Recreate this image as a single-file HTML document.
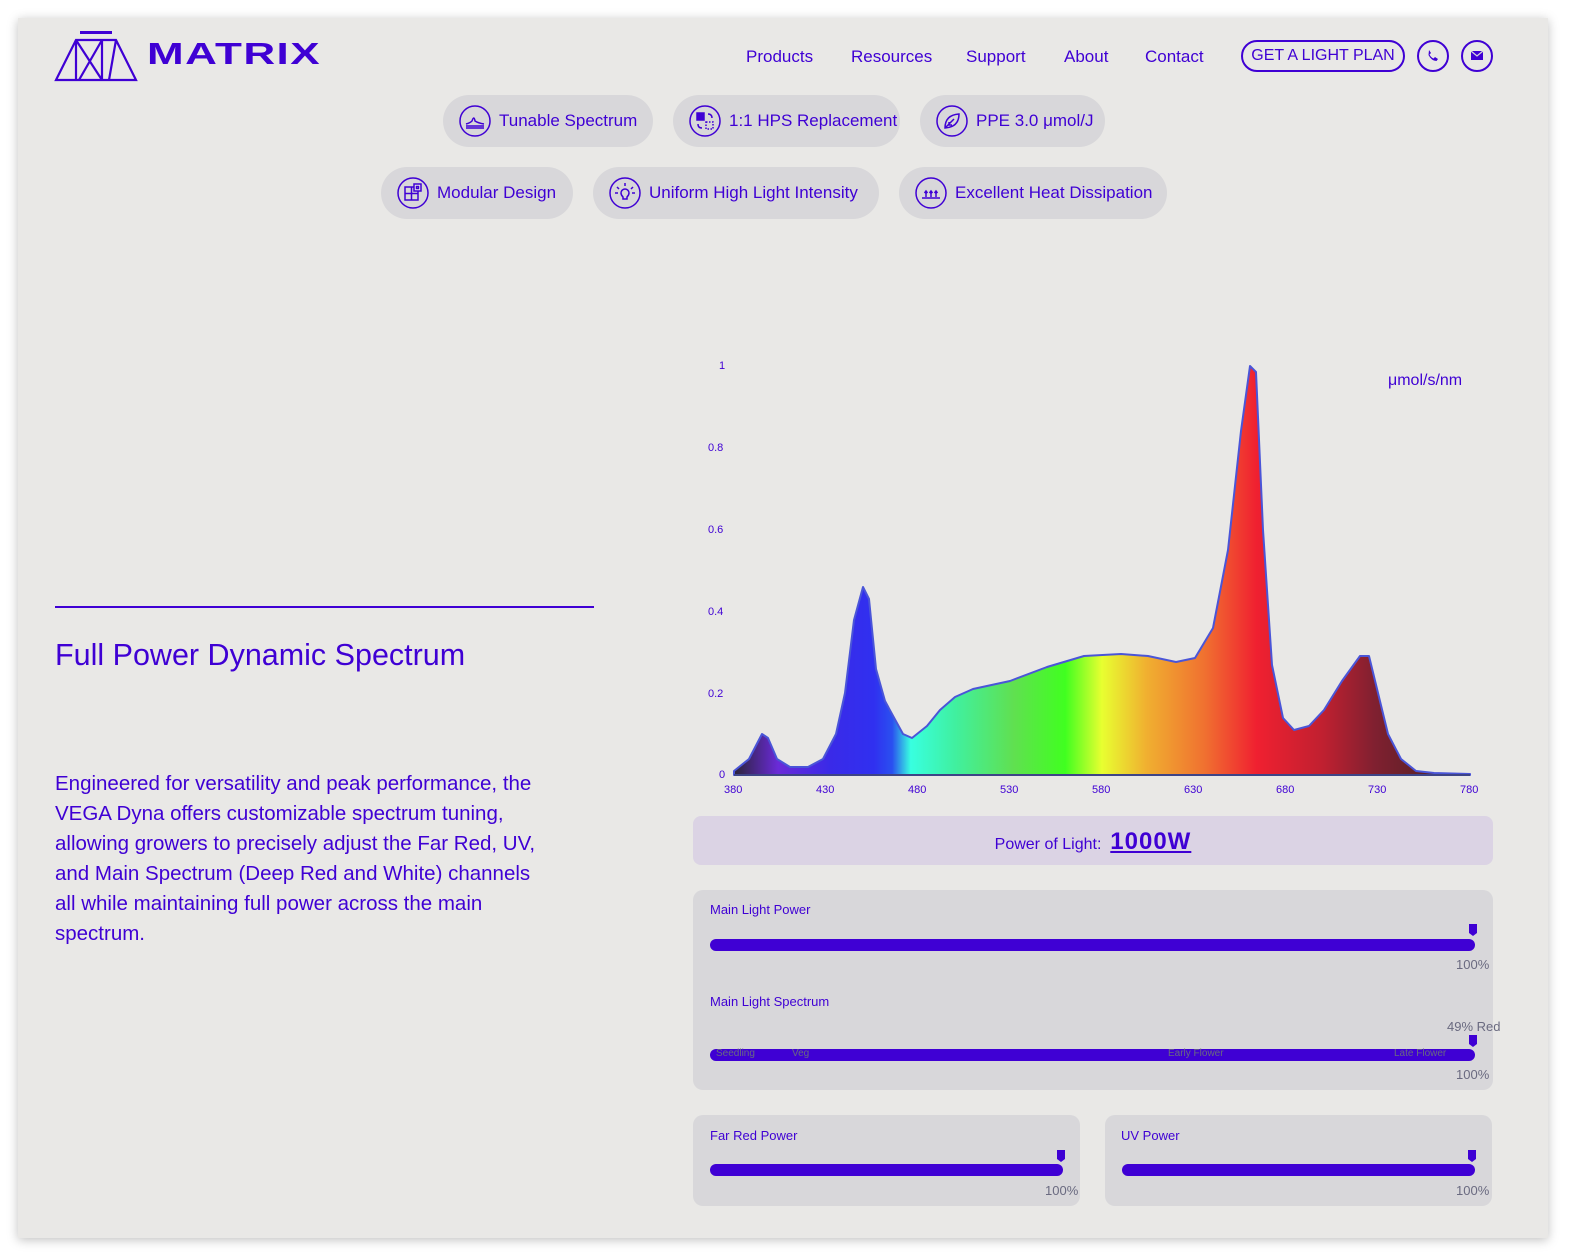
<!DOCTYPE html>
<html><head><meta charset="utf-8">
<style>
*{margin:0;padding:0;box-sizing:border-box}
body{width:1570px;height:1260px;background:#fff;font-family:"Liberation Sans",sans-serif;color:#3f00d4;position:relative;overflow:hidden}
.card{position:absolute;left:18px;top:18px;width:1530px;height:1220px;background:#e9e8e6;box-shadow:0 2px 10px rgba(0,0,0,.25)}
.a{position:absolute}
.nav{font-size:17px;top:47px}
.pill{position:absolute;height:52px;border-radius:26px;background:#d8d7da;font-size:17px;display:flex;align-items:center;padding-left:16px;white-space:nowrap}
.pill svg{width:32px;height:32px;margin-right:8px;flex:none}
.lbl{font-size:13px;position:absolute}
.pct{font-size:13px;color:#6a6a80;position:absolute}
.bar{position:absolute;height:12px;border-radius:6px;background:#3f00d4}
.knob{position:absolute;width:8px;height:12px;background:#3f00d4;clip-path:polygon(0 0,100% 0,100% 75%,50% 100%,0 75%)}
.ax{font-size:11px;position:absolute}
</style></head><body>
<div class="card"></div>

<!-- logo -->
<svg class="a" style="left:54px;top:30px" width="84" height="52" viewBox="0 0 84 52" fill="none" stroke="#3f00d4" stroke-width="2.2">
<rect x="26" y="1" width="32" height="3" fill="#3f00d4" stroke="none"/>
<path d="M2 50 L22 10 L62 10 L82 50 Z"/>
<path d="M22 10 L22 50 M48 10 L48 50 M22 10 L48 50 M48 10 L25 50 M62 10 L55 50" />
</svg>
<div class="a" style="left:147px;top:36px;font-size:31px;font-weight:700;letter-spacing:1px;transform:scaleX(1.42);transform-origin:left">MATRIX</div>

<div class="a nav" style="left:746px">Products</div>
<div class="a nav" style="left:851px">Resources</div>
<div class="a nav" style="left:966px">Support</div>
<div class="a nav" style="left:1064px">About</div>
<div class="a nav" style="left:1145px">Contact</div>
<div class="a" style="left:1241px;top:40px;width:164px;height:32px;border:2px solid #3f00d4;border-radius:16px;font-size:16px;text-align:center;line-height:28px">GET A LIGHT PLAN</div>
<div class="a" style="left:1417px;top:40px;width:32px;height:32px;border:2px solid #3f00d4;border-radius:50%"><svg width="28" height="28" viewBox="0 0 28 28"><path d="M10 8 l2 3 -1.5 1.5 q1.5 3 4 4 l1.5-1.5 3 2 -1.5 2 q-5 0 -8-6 z" fill="#3f00d4"/></svg></div>
<div class="a" style="left:1461px;top:40px;width:32px;height:32px;border:2px solid #3f00d4;border-radius:50%"><svg width="28" height="28" viewBox="0 0 28 28"><rect x="8" y="9" width="12" height="9" fill="#3f00d4"/><path d="M8 9 l6 5 6-5" stroke="#d8d7da" stroke-width="1.2" fill="none"/></svg></div>

<!-- pills -->
<div class="pill" style="left:443px;top:95px;width:210px"><svg viewBox="0 0 32 32" fill="none" stroke="#3f00d4" stroke-width="1.5"><circle cx="16" cy="16" r="15"/><path d="M7 19 q4-1 6-3 q2-6 3 0 q3 2 9 3 M7 21h18 M7 23h18"/></svg>Tunable Spectrum</div>
<div class="pill" style="left:673px;top:95px;width:227px"><svg viewBox="0 0 32 32" fill="none" stroke="#3f00d4" stroke-width="1.5"><circle cx="16" cy="16" r="15"/><rect x="8" y="8" width="7" height="7" fill="#3f00d4"/><rect x="17" y="17" width="7" height="7" stroke-dasharray="1.5 1.5"/><path d="M19 9 q4 0 4 4 M13 23 q-4 0-4-4"/></svg>1:1 HPS Replacement</div>
<div class="pill" style="left:920px;top:95px;width:185px"><svg viewBox="0 0 32 32" fill="none" stroke="#3f00d4" stroke-width="1.5"><circle cx="16" cy="16" r="15"/><path d="M9 23 q0-13 14-14 q0 13-14 14 z M9 23 l9-9 M13 17v3h3"/></svg>PPE 3.0 μmol/J</div>
<div class="pill" style="left:381px;top:167px;width:192px"><svg viewBox="0 0 32 32" fill="none" stroke="#3f00d4" stroke-width="1.5"><circle cx="16" cy="16" r="15"/><rect x="8" y="10" width="13" height="13"/><path d="M14.5 10v13 M8 16.5h13"/><rect x="17" y="7" width="7" height="7" fill="#e9e8e6"/><rect x="19.5" y="9.5" width="2" height="2"/></svg>Modular Design</div>
<div class="pill" style="left:593px;top:167px;width:286px"><svg viewBox="0 0 32 32" fill="none" stroke="#3f00d4" stroke-width="1.5"><circle cx="16" cy="16" r="15"/><path d="M12 16 a4 4 0 1 1 8 0 q0 2-2 4 v2h-4v-2 q-2-2-2-4z M16 6v3 M8 10l2 2 M24 10l-2 2 M6 16h3 M23 16h3"/></svg>Uniform High Light Intensity</div>
<div class="pill" style="left:899px;top:167px;width:268px"><svg viewBox="0 0 32 32" fill="none" stroke="#3f00d4" stroke-width="1.5"><circle cx="16" cy="16" r="15"/><path d="M7 21h18 M11 20v-6 M16 20v-6 M21 20v-6 M9.5 16l1.5-2 1.5 2 M14.5 16l1.5-2 1.5 2 M19.5 16l1.5-2 1.5 2"/></svg>Excellent Heat Dissipation</div>

<!-- left -->
<div class="a" style="left:55px;top:606px;width:539px;height:2px;background:#3f00d4"></div>
<div class="a" style="left:55px;top:638px;font-size:30.5px">Full Power Dynamic Spectrum</div>
<div class="a" style="left:55px;top:769px;white-space:nowrap;font-size:20.5px;line-height:30px">Engineered for versatility and peak performance, the<br>VEGA Dyna offers customizable spectrum tuning,<br>allowing growers to precisely adjust the Far Red, UV,<br>and Main Spectrum (Deep Red and White) channels<br>all while maintaining full power across the main<br>spectrum.</div>

<!-- chart -->
<svg class="a" style="left:0;top:0" width="1570" height="1260">
<defs><linearGradient id="g" gradientUnits="userSpaceOnUse" x1="734" y1="0" x2="1470" y2="0">
<stop offset="0" stop-color="#2a2438"/><stop offset=".06" stop-color="#6a2ad8"/><stop offset=".13" stop-color="#3a2ae8"/><stop offset=".19" stop-color="#3030f0"/><stop offset=".215" stop-color="#2a50f0"/><stop offset=".24" stop-color="#38ffe0"/><stop offset=".3" stop-color="#40f0a0"/><stop offset=".38" stop-color="#60e050"/><stop offset=".45" stop-color="#40ff20"/><stop offset=".5" stop-color="#e8ff30"/><stop offset=".56" stop-color="#f0b030"/><stop offset=".64" stop-color="#f07030"/><stop offset=".71" stop-color="#f02030"/><stop offset=".8" stop-color="#c02030"/><stop offset=".87" stop-color="#802030"/><stop offset="1" stop-color="#402020"/>
</linearGradient></defs>
<path d="M734 771 L749 759 L762 734 L768 738 L777 759 L790 767 L808 767 L823 759 L836 734 L845 693 L854 620 L863 587 L869 599 L876 669 L885 701 L892 714 L903 734 L912 738 L927 726 L940 710 L955 697 L973 689 L1010 681 L1047 667 L1084 656 L1121 654 L1148 656 L1176 662 L1195 658 L1213 628 L1228 550 L1241 431 L1250 366 L1256 372 L1263 530 L1272 665 L1283 718 L1294 730 L1309 726 L1324 710 L1342 681 L1360 656 L1369 656 L1378 693 L1388 734 L1401 759 L1416 771 L1434 773 L1470 774 L1470 775 L734 775 Z" fill="url(#g)" stroke="#4a55d8" stroke-width="2" stroke-linejoin="round"/>
<line x1="734" y1="775" x2="1470" y2="775" stroke="#333" stroke-width="1"/>
</svg>
<div class="ax" style="left:719px;top:360px">1</div>
<div class="ax" style="left:708px;top:442px">0.8</div>
<div class="ax" style="left:708px;top:524px">0.6</div>
<div class="ax" style="left:708px;top:606px">0.4</div>
<div class="ax" style="left:708px;top:688px">0.2</div>
<div class="ax" style="left:719px;top:769px">0</div>
<div class="ax" style="left:724px;top:784px">380</div>
<div class="ax" style="left:816px;top:784px">430</div>
<div class="ax" style="left:908px;top:784px">480</div>
<div class="ax" style="left:1000px;top:784px">530</div>
<div class="ax" style="left:1092px;top:784px">580</div>
<div class="ax" style="left:1184px;top:784px">630</div>
<div class="ax" style="left:1276px;top:784px">680</div>
<div class="ax" style="left:1368px;top:784px">730</div>
<div class="ax" style="left:1460px;top:784px">780</div>
<div class="a" style="left:1388px;top:372px;font-size:16px">μmol/s/nm</div>

<!-- power -->
<div class="a" style="left:693px;top:816px;width:800px;height:49px;background:#dbd3e4;border-radius:8px;text-align:center;font-size:16px;line-height:52px">Power of Light: &nbsp;<span style="font-size:24px;font-weight:700;text-decoration:underline;letter-spacing:1px">1000W</span></div>

<div class="a" style="left:693px;top:890px;width:800px;height:200px;background:#d8d7da;border-radius:10px"></div>
<div class="lbl" style="left:710px;top:902px">Main Light Power</div>
<div class="knob" style="left:1469px;top:924px"></div>
<div class="bar" style="left:710px;top:939px;width:765px"></div>
<div class="pct" style="left:1456px;top:957px">100%</div>
<div class="lbl" style="left:710px;top:994px">Main Light Spectrum</div>
<div class="pct" style="left:1447px;top:1019px">49% Red</div>
<div class="knob" style="left:1469px;top:1035px"></div>
<div class="bar" style="left:710px;top:1049px;width:765px"></div>
<div class="a" style="left:716px;top:1048px;font-size:10px;color:#6a6a80">Seedling</div>
<div class="a" style="left:792px;top:1048px;font-size:10px;color:#6a6a80">Veg</div>
<div class="a" style="left:1168px;top:1048px;font-size:10px;color:#6a6a80">Early Flower</div>
<div class="a" style="left:1394px;top:1048px;font-size:10px;color:#6a6a80">Late Flower</div>
<div class="pct" style="left:1456px;top:1067px">100%</div>

<div class="a" style="left:693px;top:1115px;width:387px;height:91px;background:#d8d7da;border-radius:10px"></div>
<div class="lbl" style="left:710px;top:1128px">Far Red Power</div>
<div class="knob" style="left:1057px;top:1150px"></div>
<div class="bar" style="left:710px;top:1164px;width:353px"></div>
<div class="pct" style="left:1045px;top:1183px">100%</div>

<div class="a" style="left:1105px;top:1115px;width:387px;height:91px;background:#d8d7da;border-radius:10px"></div>
<div class="lbl" style="left:1121px;top:1128px">UV Power</div>
<div class="knob" style="left:1468px;top:1150px"></div>
<div class="bar" style="left:1122px;top:1164px;width:353px"></div>
<div class="pct" style="left:1456px;top:1183px">100%</div>
</body></html>
